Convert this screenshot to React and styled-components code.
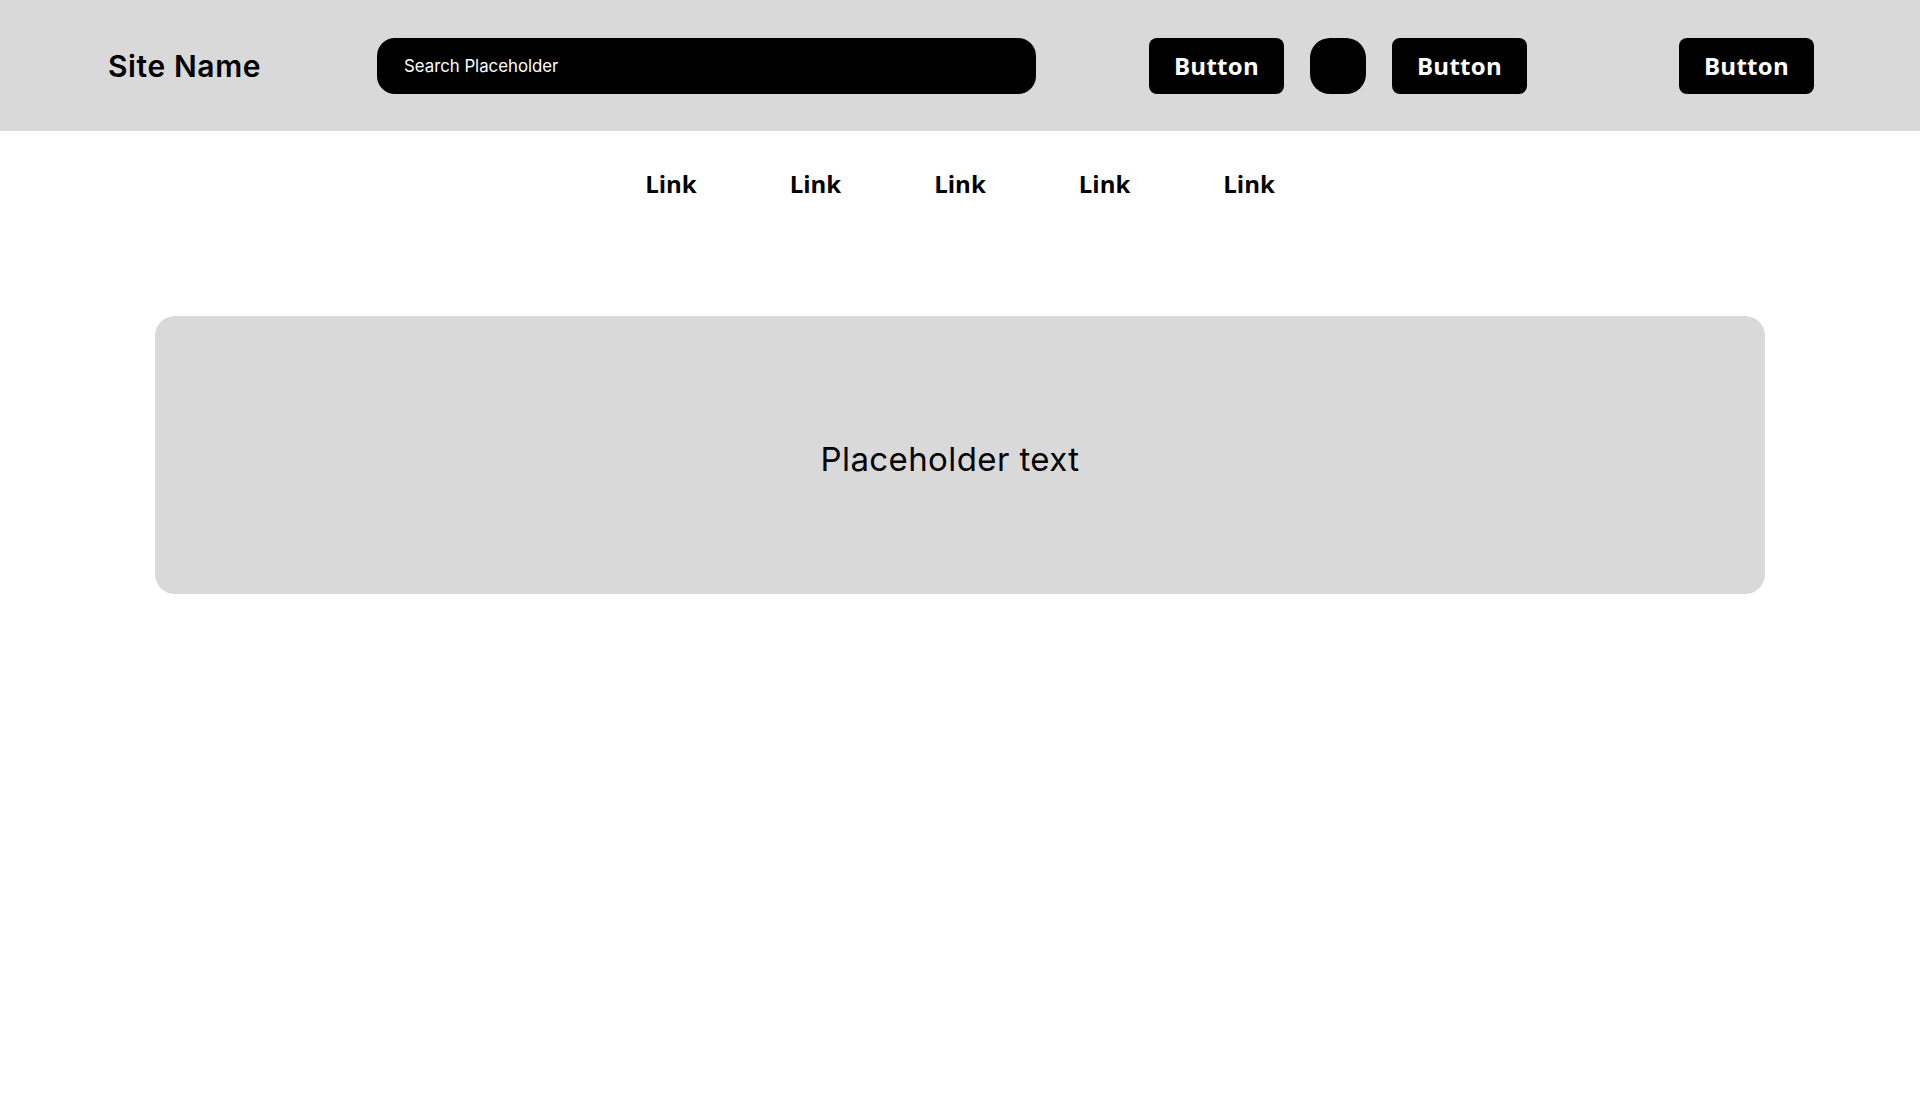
import styled, { createGlobalStyle } from 'styled-components'

const GlobalStyle = createGlobalStyle`
  html, body {
    margin: 0;
    padding: 0;
    background: #fff;
    font-family: "Open Sans", "Liberation Sans", sans-serif;
  }
`

const Header = styled.header`
  display: flex;
  align-items: center;
  height: 131px;
  padding: 0 106px 0 108px;
  background: #d9d9d9;
`

const Logo = styled.h1`
  width: 269px;
  margin: 0;
  font-family: "Inter", sans-serif;
  font-size: 30px;
  font-weight: 600;
  letter-spacing: 0.6px;
  color: #000;
`

const Search = styled.div`
  display: flex;
  align-items: center;
  width: 659px;
  height: 56px;
  padding-left: 27px;
  box-sizing: border-box;
  border-radius: 18px;
  background: #000;
  color: #fff;
  font-family: "Inter", sans-serif;
  font-size: 16.8px;
`

const Actions = styled.div`
  display: flex;
  align-items: center;
  gap: 26px;
  margin-left: 113px;
  flex: 1;
`

const Button = styled.button`
  display: flex;
  align-items: center;
  justify-content: center;
  width: ${p => (p.$square ? '56px' : '135px')};
  height: 56px;
  margin-left: ${p => (p.$push ? 'auto' : '0')};
  border: none;
  border-radius: ${p => (p.$square ? '20px' : '8px')};
  background: #000;
  color: #fff;
  font-family: "Open Sans", sans-serif;
  font-size: 24px;
  font-weight: 700;
  letter-spacing: 0.3px;
  padding: 0;
`

const Nav = styled.nav`
  display: flex;
  justify-content: center;
  gap: 93px;
  padding-top: 37px;
`

const NavLink = styled.a`
  font-size: 24px;
  line-height: 32px;
  font-weight: 700;
  color: #000;
  text-decoration: none;
`

const Hero = styled.section`
  display: flex;
  align-items: center;
  justify-content: center;
  height: 278px;
  margin: 116px 155px 0;
  padding: 8px 20px 0 0;
  box-sizing: border-box;
  border-radius: 20px;
  background: #d9d9d9;
  font-family: "Inter", sans-serif;
  font-size: 33px;
  font-weight: 400;
  letter-spacing: 0.4px;
  color: #000;
`

const App = () => {
  return (
    <>
      <GlobalStyle />
      <Header>
        <Logo>Site Name</Logo>
        <Search>Search Placeholder</Search>
        <Actions>
          <Button>Button</Button>
          <Button $square />
          <Button>Button</Button>
          <Button $push>Button</Button>
        </Actions>
      </Header>
      <Nav>
        <NavLink>Link</NavLink>
        <NavLink>Link</NavLink>
        <NavLink>Link</NavLink>
        <NavLink>Link</NavLink>
        <NavLink>Link</NavLink>
      </Nav>
      <Hero>Placeholder text</Hero>
    </>
  )
}

export default App
